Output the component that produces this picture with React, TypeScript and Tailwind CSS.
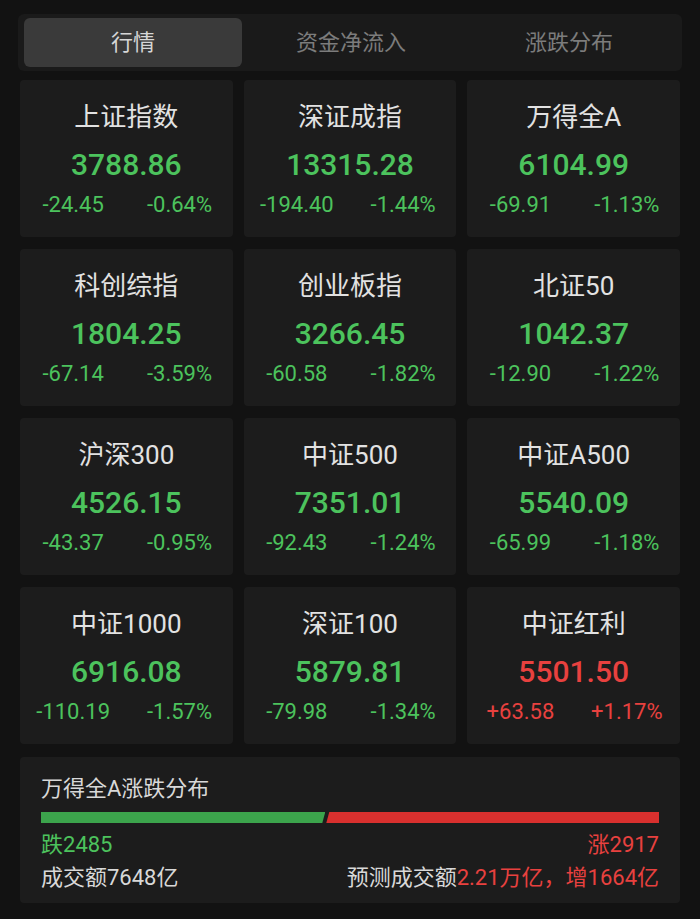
const FONT = "font-['Roboto','Noto_Sans_CJK_SC',sans-serif]"

interface IndexItem {
  name: string
  value: string
  change: string
  pct: string
  up?: boolean
}

const indices: IndexItem[] = [
  { name: '上证指数', value: '3788.86', change: '-24.45', pct: '-0.64%' },
  { name: '深证成指', value: '13315.28', change: '-194.40', pct: '-1.44%' },
  { name: '万得全A', value: '6104.99', change: '-69.91', pct: '-1.13%' },
  { name: '科创综指', value: '1804.25', change: '-67.14', pct: '-3.59%' },
  { name: '创业板指', value: '3266.45', change: '-60.58', pct: '-1.82%' },
  { name: '北证50', value: '1042.37', change: '-12.90', pct: '-1.22%' },
  { name: '沪深300', value: '4526.15', change: '-43.37', pct: '-0.95%' },
  { name: '中证500', value: '7351.01', change: '-92.43', pct: '-1.24%' },
  { name: '中证A500', value: '5540.09', change: '-65.99', pct: '-1.18%' },
  { name: '中证1000', value: '6916.08', change: '-110.19', pct: '-1.57%' },
  { name: '深证100', value: '5879.81', change: '-79.98', pct: '-1.34%' },
  { name: '中证红利', value: '5501.50', change: '+63.58', pct: '+1.17%', up: true },
]

const tabs = ['行情', '资金净流入', '涨跌分布']

function IndexCard({ item }: { item: IndexItem }) {
  const color = item.up ? 'text-[#e8413f]' : 'text-[#4cc35d]'
  return (
    <div className="flex h-[157px] flex-col rounded bg-[#1c1c1c] pt-[19px] text-center">
      <div className="text-[26px] leading-[36px] text-[#e2e2e2]">{item.name}</div>
      <div className={`mt-3 text-[30px] font-medium leading-[36px] ${color}`}>{item.value}</div>
      <div className={`mt-2 grid grid-cols-2 text-[22px] leading-[28px] ${color}`}>
        <span>{item.change}</span>
        <span>{item.pct}</span>
      </div>
    </div>
  )
}

export default function App() {
  const fall = 2485
  const rise = 2917
  const fallPct = (fall / (fall + rise)) * 100

  return (
    <div className={`min-h-[919px] w-[700px] bg-[#121212] px-[18px] pt-[14px] ${FONT}`}>
      {/* Tabs */}
      <div className="flex h-[57px] rounded-md bg-[#1a1a1a] py-1 pl-[6px] pr-1">
        {tabs.map((t, i) => (
          <div
            key={t}
            className={`flex flex-1 items-center justify-center rounded-md text-[22px] ${
              i === 0 ? 'bg-[#3a3a3a] text-[#d6d6d6]' : 'text-[#7c7c7c]'
            }`}
          >
            {t}
          </div>
        ))}
      </div>

      <div className="px-[2px]">
        {/* Index cards */}
        <div className="mt-[9px] grid grid-cols-3 gap-x-[11px] gap-y-3">
          {indices.map((item) => (
            <IndexCard key={item.name} item={item} />
          ))}
        </div>

        {/* Rise / fall distribution */}
        <div className="mt-[13px] h-[146px] rounded bg-[#1c1c1c] px-[21px] pt-[18px]">
          <div className="text-[22px] leading-[28px] text-[#d8d8d8]">万得全A涨跌分布</div>
          <div className="mt-[9px] flex h-[11px] w-full">
            <div
              className="h-full bg-[#3ca44c] [clip-path:polygon(0_0,100%_0,calc(100%-3px)_100%,0_100%)]"
              style={{ width: `${fallPct}%` }}
            />
            <div className="ml-[1px] h-full flex-1 bg-[#d8302e] [clip-path:polygon(3px_0,100%_0,100%_100%,0_100%)]" />
          </div>
          <div className="mt-2 flex justify-between text-[22px] leading-[28px]">
            <span className="text-[#4cc35d]">跌{fall}</span>
            <span className="text-[#e8413f]">涨{rise}</span>
          </div>
          <div className="mt-[5px] flex justify-between text-[22px] leading-[28px] text-[#d8d8d8]">
            <span>成交额7648亿</span>
            <span>
              预测成交额<span className="text-[#e8413f]">2.21万亿，增1664亿</span>
            </span>
          </div>
        </div>
      </div>
    </div>
  )
}
